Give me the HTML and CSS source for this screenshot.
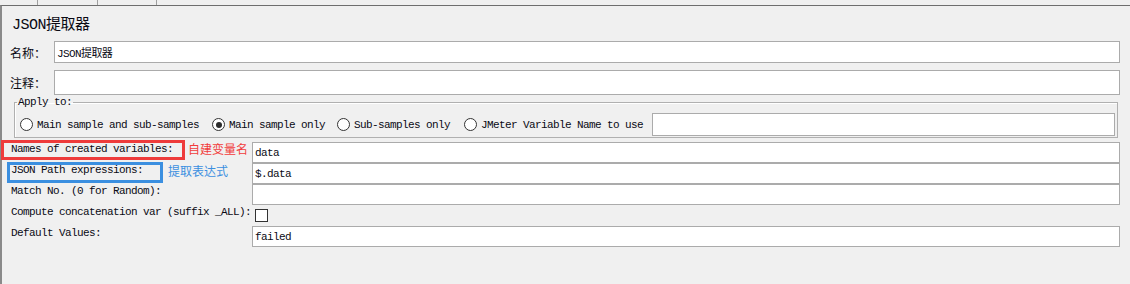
FILE: index.html
```html
<!DOCTYPE html>
<html lang="zh-CN">
<head>
    <meta charset="UTF-8">
    <title>JSON提取器</title>
    <link rel="stylesheet" href="styles.css">
</head>
<body>
    <div class="tabs"><span></span><span></span><span></span></div>
    <div class="panel">
        <div class="title">JSON提取器</div>
        <div class="row name-row">
            <label class="cn">名称：</label>
            <div class="field">JSON提取器</div>
        </div>
        <div class="row note-row">
            <label class="cn">注释：</label>
            <div class="field"></div>
        </div>
        <fieldset class="apply">
            <legend>Apply to:</legend>
            <div class="radios">
                <span class="radio"></span><span class="rtext first">Main sample and sub-samples</span>
                <span class="radio on"></span><span class="rtext">Main sample only</span>
                <span class="radio"></span><span class="rtext third">Sub-samples only</span>
                <span class="radio"></span><span class="rtext last">JMeter Variable Name to use</span>
                <div class="field var-field"></div>
            </div>
        </fieldset>
        <div class="grid">
            <div class="lbl">
                Names of created variables:
                <span class="mark red-box"></span>
                <span class="note red">自建变量名</span>
            </div>
            <div class="field">data</div>

            <div class="lbl">
                JSON Path expressions:
                <span class="mark blue-box"></span>
                <span class="note blue">提取表达式</span>
            </div>
            <div class="field">$.data</div>

            <div class="lbl">Match No. (0 for Random):</div>
            <div class="field"></div>

            <div class="lbl">Compute concatenation var (suffix _ALL):</div>
            <div class="check-cell"><span class="check"></span></div>

            <div class="lbl">Default Values:</div>
            <div class="field">failed</div>
        </div>
    </div>
</body>
</html>
```

FILE: styles.css
```css
html, body {margin: 0; padding: 0; background: #f0f0f0;}
body {font-family: "Liberation Mono", "Noto Sans CJK SC", monospace; color: #0a0a14; height: 284px; overflow: hidden;}

.tabs {height: 5px;}
.tabs span {display: inline-block; width: 1px; height: 5px; background: #a0a0a0; vertical-align: top;}
.tabs span:nth-child(1) {margin-left: 37px;}
.tabs span:nth-child(2) {margin-left: 59px;}
.tabs span:nth-child(3) {margin-left: 58px;}

.panel {border-top: 1px solid #6e6e6e; border-left: 2px solid #8a8a8a; padding: 0 10px 0 8px; height: 278px;}

.title {height: 35px; box-sizing: border-box; padding: 4px 0 0 2px; line-height: 31px; font-size: 15px; letter-spacing: -0.5px;}

.row {display: flex; align-items: center;}
.name-row {height: 22px;}
.note-row {height: 25px; margin-top: 7px;}
.cn {width: 44px; font-family: "Noto Sans CJK SC", sans-serif; font-size: 12px;}
.row .field {flex: 1; height: 100%;}

.field {box-sizing: border-box; background: #fff; border: 1px solid #ababab; padding-left: 2px; font-size: 11px; letter-spacing: -0.6px; display: flex; align-items: center; white-space: nowrap;}

.apply {margin: 1px 2px 0 4px; padding: 5px 2px 1px 5px; border: 1px solid #b0b0b0; box-shadow: inset 1px 1px 0 #fff; min-width: 0;}
.apply legend {padding: 0 1px; margin-left: -3px; font-size: 11px; letter-spacing: -0.6px; line-height: 12px;}
.radios {display: flex; align-items: center; height: 23px;}
.radio {width: 11px; height: 11px; border: 1px solid #333; border-radius: 50%; background: #fff; position: relative; flex: none;}
.radio.on::after {content: ""; position: absolute; left: 2.5px; top: 2.5px; width: 6px; height: 6px; border-radius: 50%; background: #2b2b2b;}
.rtext {font-size: 11px; letter-spacing: -0.6px; margin: 0 12px 0 4px; white-space: nowrap;}
.rtext.first {margin-right: 13px;}
.rtext.third {margin-right: 14px;}
.rtext.last {margin-right: 9px;}
.var-field {flex: 1; height: 23px;}

.grid {display: grid; grid-template-columns: 242px 1fr; grid-auto-rows: 21px; margin-top: 4px;}
.lbl {position: relative; font-size: 11px; letter-spacing: -0.6px; line-height: 14px; white-space: nowrap; padding-left: 1px;}
.grid .field {height: 21px;}

.mark {position: absolute; box-sizing: border-box;}
.red-box {left: -9px; top: -2px; width: 184px; height: 20px; border: 3px solid #ee3b3b;}
.blue-box {left: -3px; top: -1px; width: 156px; height: 21px; border: 3px solid #3b8fe0;}
.note {position: absolute; font-family: "Noto Sans CJK SC", sans-serif; font-size: 12px; letter-spacing: 0; line-height: 16px;}
.note.red {left: 178px; top: -1px; color: #f23c3c;}
.note.blue {left: 158px; top: 0; color: #3b8fe0;}

.check-cell {display: flex;}
.check {width: 11px; height: 11px; border: 1px solid #333; background: #fff; margin: 4px 0 0 3px;}
```
